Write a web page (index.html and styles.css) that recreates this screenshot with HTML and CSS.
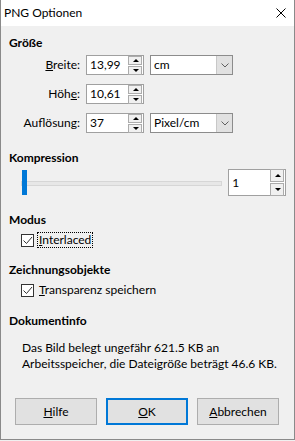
FILE: index.html
```html
<!doctype html>
<html>
  <head>
    <meta charset="UTF-8" />
    <title>PNG Optionen</title>
    <link rel="stylesheet" href="styles.css">
  </head>
  <body>
    <div class="window">
      <div class="titlebar">
        <span class="title">PNG Optionen</span>
        <svg class="close" width="10" height="10" viewBox="0 0 10 10">
          <path d="M0.5 0.5 L9.5 9.5 M9.5 0.5 L0.5 9.5" stroke="#000" stroke-width="1" fill="none" />
        </svg>
      </div>
      <div class="content">
        <div class="heading">Größe</div>
        <div class="size-grid">
          <label class="field-label"><u>B</u>reite:</label>
          <div class="spin"><span class="spin-value">13,99</span><span class="spin-btns"><span class="up"></span><span class="down"></span></span></div>
          <div class="select"><span class="select-value">cm</span><span class="select-btn"><svg width="8" height="5" viewBox="0 0 8 5"><path d="M0.5 0.5 L4 4 L7.5 0.5" stroke="#606060" fill="none" /></svg></span></div>

          <label class="field-label">Höh<u>e</u>:</label>
          <div class="spin"><span class="spin-value">10,61</span><span class="spin-btns"><span class="up"></span><span class="down"></span></span></div>
          <div class="grid-gap"></div>

          <label class="field-label">Auf<u>l</u>ösung:</label>
          <div class="spin"><span class="spin-value">37</span><span class="spin-btns"><span class="up"></span><span class="down"></span></span></div>
          <div class="select"><span class="select-value">Pixel/cm</span><span class="select-btn"><svg width="8" height="5" viewBox="0 0 8 5"><path d="M0.5 0.5 L4 4 L7.5 0.5" stroke="#606060" fill="none" /></svg></span></div>
        </div>

        <div class="heading heading-komp">Kompression</div>
        <div class="slider-row">
          <div class="slider">
            <div class="track"></div>
            <div class="thumb"></div>
          </div>
          <div class="spin spin-tall"><span class="spin-value">1</span><span class="spin-btns"><span class="up"></span><span class="down"></span></span></div>
        </div>

        <div class="heading heading-modus">Modus</div>
        <div class="check-row">
          <span class="checkbox"><svg width="11" height="11" viewBox="0 0 11 11"><path d="M1.5 5.5 L4.5 8.5 L10 2" stroke="#333" fill="none" /></svg></span>
          <span class="check-label focused"><u>I</u>nterlaced</span>
        </div>

        <div class="heading heading-zeich">Zeichnungsobjekte</div>
        <div class="check-row">
          <span class="checkbox"><svg width="11" height="11" viewBox="0 0 11 11"><path d="M1.5 5.5 L4.5 8.5 L10 2" stroke="#333" fill="none" /></svg></span>
          <span class="check-label"><u>T</u>ransparenz speichern</span>
        </div>

        <div class="heading heading-doku">Dokumentinfo</div>
        <p class="info">Das Bild belegt ungefähr 621.5 KB an<br>Arbeitsspeicher, die Dateigröße beträgt 46.6 KB.</p>

        <div class="buttons">
          <button class="btn"><u>H</u>ilfe</button>
          <button class="btn btn-default"><u>O</u>K</button>
          <button class="btn"><u>A</u>bbrechen</button>
        </div>
      </div>
    </div>
  </body>
</html>
```
FILE: styles.css
```css
body {
  margin: 0;
  font-family: Lato, "Noto Sans", sans-serif;
  font-size: 12px;
  color: #000;
  background: #f0f0f0;
}
.window {
  width: 295px;
  height: 440px;
  box-sizing: border-box;
  border: 1px solid #8a8a8a;
  border-top: none;
  background: #f0f0f0;
  display: flex;
  flex-direction: column;
  overflow: hidden;
}
.titlebar {
  flex-shrink: 0;
  height: 26px;
  background: #fff;
  display: flex;
  align-items: center;
  justify-content: space-between;
  padding: 0 9px 0 4px;
  margin: 0 -1px;
}
.title {
  line-height: 16px;
}
.close {
  display: block;
}
.content {
  flex-shrink: 0;
  padding: 9px 8px 0 8px;
  display: flex;
  flex-direction: column;
}
.heading {
  font-weight: bold;
  line-height: 16px;
  height: 16px;
}
.size-grid {
  display: grid;
  grid-template-columns: 71px 58px 83px;
  grid-auto-rows: 20px;
  column-gap: 6px;
  row-gap: 9px;
  margin-top: 4px;
}
.field-label {
  text-align: right;
  align-self: center;
  line-height: 16px;
}
.spin {
  background: #fff;
  border: 1px solid #a0a0a0;
  box-sizing: border-box;
  display: flex;
  align-items: center;
  justify-content: space-between;
  padding: 0 1px 0 3px;
}
.spin-value {
  line-height: 16px;
}
.spin-btns {
  display: flex;
  flex-direction: column;
  gap: 1px;
  width: 14px;
}
.spin-btns span {
  height: 7px;
  background: #f0f0f0;
  border: 1px solid #acacac;
  box-sizing: content-box;
  position: relative;
}
.spin-btns span::after {
  content: "";
  position: absolute;
  left: 4px;
  border-left: 3px solid transparent;
  border-right: 3px solid transparent;
}
.spin-btns .up::after {
  top: 2px;
  border-bottom: 3px solid #000;
}
.spin-btns .down::after {
  top: 2px;
  border-top: 3px solid #000;
}
.select {
  background: #fff;
  border: 1px solid #8c8c8c;
  box-sizing: border-box;
  display: flex;
  align-items: stretch;
  justify-content: space-between;
  padding-left: 3px;
}
.select-value {
  line-height: 18px;
}
.select-btn {
  width: 15px;
  background: #e1e1e1;
  border-left: 1px solid #c8c8c8;
  display: flex;
  align-items: center;
  justify-content: center;
}
.heading-komp {
  margin-top: 17px;
}
.slider-row {
  display: flex;
  align-items: center;
  margin-top: 3px;
  height: 27px;
}
.slider {
  position: relative;
  margin-left: 12px;
  width: 202px;
  height: 27px;
}
.track {
  position: absolute;
  left: 0;
  right: 0;
  top: 12px;
  height: 3px;
  background: #e7e7e7;
  border: 1px solid #d6d6d6;
}
.thumb {
  position: absolute;
  left: 1px;
  top: 1px;
  width: 5px;
  height: 25px;
  background: #0078d7;
}
.spin-tall {
  margin-left: 6px;
  width: 58px;
  height: 27px;
}
.spin-tall .spin-btns span {
  height: 11px;
}
.spin-tall .spin-btns .up::after {
  top: 4px;
}
.spin-tall .spin-btns .down::after {
  top: 4px;
}
.heading-modus {
  margin-top: 16px;
}
.check-row {
  display: flex;
  align-items: center;
  margin-top: 4px;
  margin-left: 12px;
  height: 16px;
}
.checkbox {
  width: 11px;
  height: 11px;
  border: 1px solid #333;
  background: #fff;
  display: flex;
}
.check-label {
  margin-left: 3px;
  line-height: 14px;
  padding: 0 1px;
  border: 1px dotted transparent;
}
.check-label.focused {
  border-color: #000;
}
.heading-zeich {
  margin-top: 14px;
}
.heading-doku {
  margin-top: 15px;
}
.info {
  margin: 11px 0 0 13px;
  line-height: 16px;
}
.buttons {
  display: flex;
  gap: 9px;
  margin-top: 26px;
  margin-left: 6px;
}
.btn {
  width: 82px;
  height: 27px;
  background: #e1e1e1;
  border: 1px solid #adadad;
  font-family: inherit;
  font-size: 12px;
  color: #000;
  padding: 0;
}
.btn-default {
  border: 2px solid #0078d7;
}
```
